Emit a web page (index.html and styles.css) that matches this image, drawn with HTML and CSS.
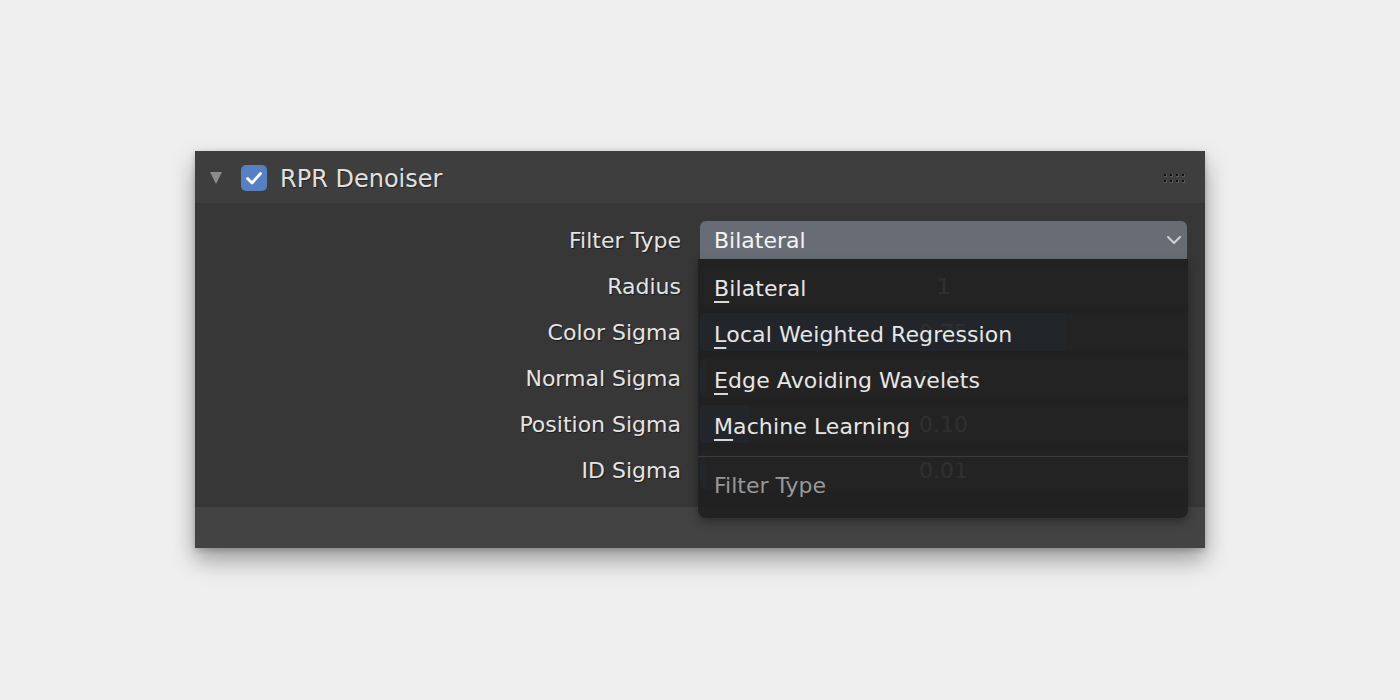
FILE: index.html
```html
<!DOCTYPE html>
<html>
<head>
<meta charset="utf-8">
<link rel="stylesheet" href="styles.css">
</head>
<body>
<div class="panel">
  <div class="header">
    <span class="disclosure"></span>
    <span class="checkbox">
      <svg width="26" height="26" viewBox="0 0 26 26"><path d="M6.5 13.5 L11 18 L19.5 8.5" fill="none" stroke="#ffffff" stroke-width="2.8" stroke-linecap="round" stroke-linejoin="round"/></svg>
    </span>
    <span class="title">RPR Denoiser</span>
    <span class="grip">
      <svg width="24" height="12" viewBox="0 0 24 12">
        <g fill="#5a5a5a">
          <rect x="1" y="1" width="3" height="3"/><rect x="7" y="1" width="3" height="3"/><rect x="13" y="1" width="3" height="3"/><rect x="19" y="1" width="3" height="3"/>
          <rect x="1" y="7" width="3" height="3"/><rect x="7" y="7" width="3" height="3"/><rect x="13" y="7" width="3" height="3"/><rect x="19" y="7" width="3" height="3"/>
        </g>
        <g fill="#111">
          <rect x="1" y="1" width="2" height="2"/><rect x="7" y="1" width="2" height="2"/><rect x="13" y="1" width="2" height="2"/><rect x="19" y="1" width="2" height="2"/>
          <rect x="1" y="7" width="2" height="2"/><rect x="7" y="7" width="2" height="2"/><rect x="13" y="7" width="2" height="2"/><rect x="19" y="7" width="2" height="2"/>
        </g>
      </svg>
    </span>
  </div>
  <div class="body">
    <div class="row">
      <span class="label">Filter Type</span>
      <div class="dropdown-wrap">
        <div class="dropdown">
          <span>Bilateral</span>
          <svg class="chev" width="16" height="10" viewBox="0 0 16 10"><path d="M2 2 L8 8 L14 2" fill="none" stroke="#d0d0d0" stroke-width="2" stroke-linecap="round" stroke-linejoin="round"/></svg>
        </div>
        <div class="menu">
          <div class="item"><u>B</u>ilateral</div>
          <div class="item"><u>L</u>ocal Weighted Regression</div>
          <div class="item"><u>E</u>dge Avoiding Wavelets</div>
          <div class="item"><u>M</u>achine Learning</div>
          <div class="sep"></div>
          <div class="menu-title">Filter Type</div>
        </div>
      </div>
    </div>
    <div class="row">
      <span class="label">Radius</span>
      <div class="slider"><span class="fill" style="width:0%"></span><span class="value">1</span></div>
    </div>
    <div class="row">
      <span class="label">Color Sigma</span>
      <div class="slider"><span class="fill" style="width:75%"></span><span class="value">0.75</span></div>
    </div>
    <div class="row">
      <span class="label">Normal Sigma</span>
      <div class="slider"><span class="fill" style="width:1%"></span><span class="value">0.01</span></div>
    </div>
    <div class="row">
      <span class="label">Position Sigma</span>
      <div class="slider"><span class="fill" style="width:10%"></span><span class="value">0.10</span></div>
    </div>
    <div class="row">
      <span class="label">ID Sigma</span>
      <div class="slider"><span class="fill" style="width:1%"></span><span class="value">0.01</span></div>
    </div>
  </div>
  <div class="footer"></div>
</div>
</body>
</html>
```
FILE: styles.css
```css
html, body {
  margin: 0;
  padding: 0;
}
body {
  background: #efefef;
  width: 1400px;
  height: 700px;
  display: flex;
  align-items: center;
  justify-content: center;
  font-family: "DejaVu Sans", "Liberation Sans", sans-serif;
  color: #e6e6e6;
}
.panel {
  width: 1010px;
  height: 397px;
  margin-top: -1px;
  display: flex;
  flex-direction: column;
  background: #373737;
  box-shadow: 0 12px 22px rgba(0, 0, 0, 0.35), 0 2px 6px rgba(0, 0, 0, 0.2);
}
.header {
  height: 52px;
  flex: none;
  background: #3e3e3e;
  display: flex;
  align-items: center;
  padding: 0 18px 0 15px;
}
.disclosure {
  width: 0;
  height: 0;
  border-left: 6px solid transparent;
  border-right: 6px solid transparent;
  border-top: 12px solid #8c8c8c;
  margin-right: 19px;
  margin-top: 2px;
}
.checkbox {
  width: 26px;
  height: 26px;
  border-radius: 5px;
  background: #5680c2;
  margin-right: 13px;
  margin-top: 2px;
  display: flex;
}
.title {
  font-size: 24px;
  color: #e0e0e0;
  margin-top: 4px;
  text-shadow: 1px 1px 1px rgba(0, 0, 0, 0.45);
}
.grip {
  margin-left: auto;
  display: flex;
  margin-top: 3px;
}
.body {
  flex: 1;
  padding: 18px 18px 18px 0;
  display: flex;
  flex-direction: column;
  gap: 8px;
}
.row {
  height: 38px;
  display: grid;
  grid-template-columns: 486px 487px;
  column-gap: 19px;
  align-items: center;
}
.label {
  text-align: right;
  font-size: 22px;
  color: #e4e4e4;
  text-shadow: 1px 1px 1px rgba(0, 0, 0, 0.5);
}
.dropdown-wrap {
  position: relative;
  height: 38px;
  z-index: 2;
}
.dropdown {
  height: 38px;
  box-sizing: border-box;
  background: #686c75;
  border-radius: 6px 6px 0 0;
  display: flex;
  align-items: center;
  padding: 0 5px 0 14px;
  font-size: 22px;
  color: #f4f4f4;
}
.chev {
  margin-left: auto;
}
.slider {
  position: relative;
  height: 38px;
  background: #545454;
  border-radius: 5px;
  overflow: hidden;
  display: flex;
  align-items: center;
  justify-content: center;
}
.fill {
  position: absolute;
  left: 0;
  top: 0;
  bottom: 0;
  background: #4772b3;
}
.value {
  position: relative;
  font-size: 22px;
  color: #e6e6e6;
}
.menu {
  position: absolute;
  top: 38px;
  left: -2px;
  right: -1px;
  height: 259px;
  box-sizing: border-box;
  background: rgba(31, 31, 31, 0.92);
  border-radius: 0 0 8px 8px;
  box-shadow: 0 4px 10px rgba(0, 0, 0, 0.35);
  padding-top: 6px;
}
.item {
  height: 46px;
  display: flex;
  align-items: center;
  padding-left: 16px;
  font-size: 22px;
  letter-spacing: 0.1px;
  color: #e6e6e6;
}
.item u {
  text-decoration-thickness: 2px;
  text-underline-offset: 5px;
  text-decoration-color: #d8d8d8;
}
.sep {
  height: 1px;
  background: #3c3c3c;
  margin-top: 7px;
}
.menu-title {
  height: 46px;
  margin-top: 5px;
  display: flex;
  align-items: center;
  padding-left: 16px;
  font-size: 22px;
  color: #989898;
}
.footer {
  height: 41px;
  flex: none;
  background: #434343;
}
```
